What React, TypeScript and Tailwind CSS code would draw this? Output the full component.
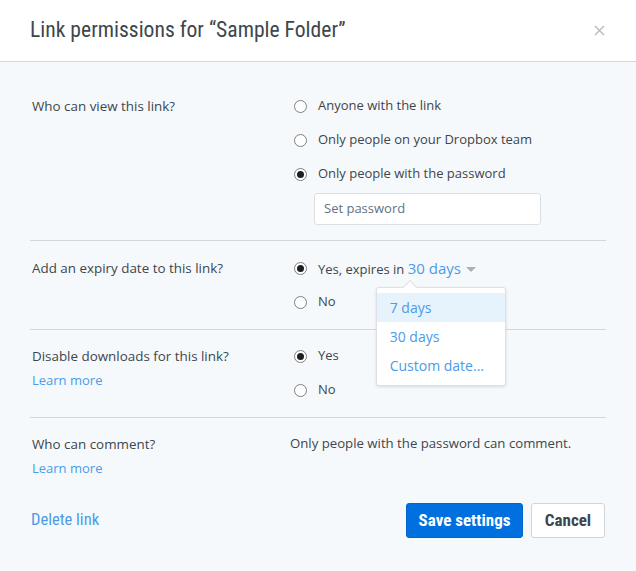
import React from 'react';

const Radio = ({ checked = false }: { checked?: boolean }) => (
  <span className="w-[13px] h-[13px] rounded-full border border-[#7b8187] bg-white flex items-center justify-center shrink-0">
    {checked && <span className="w-[7px] h-[7px] rounded-full bg-[#1e1e1e]" />}
  </span>
);

const Option = ({ checked, children }: { checked?: boolean; children: React.ReactNode }) => (
  <div className="h-[34px] flex items-center gap-[11px] pl-[4px]">
    <Radio checked={checked} />
    <span>{children}</span>
  </div>
);

const Label = ({ text, learnMore }: { text: string; learnMore?: boolean }) => (
  <div className="pt-[5px] pl-[2px] leading-[24px] text-[13.4px]">
    <div>{text}</div>
    {learnMore && <div className="text-[#4a9be9] text-[13px]">Learn more</div>}
  </div>
);

const cond = "font-['Liberation_Sans_Narrow','Roboto_Condensed','Roboto',sans-serif]";

export default function App() {
  return (
    <div className="w-[636px] h-[571px] bg-[#f6f9fb] text-[13px] text-[#3d464d] font-['Open_Sans','Liberation_Sans',sans-serif]">
      <div className="h-[62px] bg-white border-b border-[#d3d8dc] flex items-center justify-between pl-[30px] pr-[30px]">
        <h1 className={`${cond} text-[21.6px] text-[#3d464d]`}>
          Link permissions for “Sample Folder”
        </h1>
        <svg width="11" height="11" viewBox="0 0 11 11" className="mr-[1px]">
          <path d="M1 1 L10 10 M10 1 L1 10" stroke="#b8bec4" strokeWidth="1.5" />
        </svg>
      </div>

      <div className="px-[30px]">
        <div className="grid grid-cols-[260px_1fr] pt-[27px] pb-[15px] border-b border-[#d3d8dc]">
          <Label text="Who can view this link?" />
          <div>
            <Option>Anyone with the link</Option>
            <Option>Only people on your Dropbox team</Option>
            <Option checked>Only people with the password</Option>
            <div className="pl-[24px] mt-[2px]">
              <div className="w-[227px] h-[32px] bg-white border border-[#dce0e3] rounded-[3px] flex items-center px-[9px] text-[#637282]">
                Set password
              </div>
            </div>
          </div>
        </div>

        <div className="grid grid-cols-[260px_1fr] pt-[10px] pb-[10px] border-b border-[#d3d8dc]">
          <Label text="Add an expiry date to this link?" />
          <div>
            <Option checked>
              Yes, expires in{' '}
              <span className="relative text-[#4a9be9] text-[15px]">
                30 days
                <span className="inline-block ml-[5px] align-middle w-0 h-0 border-l-[5px] border-r-[5px] border-t-[5px] border-l-transparent border-r-transparent border-t-[#a9b0b7]" />
                <div className="absolute left-[-32px] top-[29px] w-[130px] bg-white border border-[#dde1e5] rounded-[3px] shadow-[0_1px_3px_rgba(0,0,0,0.12)] py-[5px] z-10 text-[14px]">
                  <div className="absolute -top-[6px] left-[28px] w-[10px] h-[10px] bg-white border-l border-t border-[#dde1e5] rotate-45" />
                  <div className="relative h-[29px] flex items-center pl-[13px] bg-[#e6f2fc]">7 days</div>
                  <div className="h-[29px] flex items-center pl-[13px]">30 days</div>
                  <div className="h-[29px] flex items-center pl-[13px]">Custom date...</div>
                </div>
              </span>
            </Option>
            <Option>No</Option>
          </div>
        </div>

        <div className="grid grid-cols-[260px_1fr] pt-[9px] pb-[10px] border-b border-[#d3d8dc]">
          <Label text="Disable downloads for this link?" learnMore />
          <div>
            <Option checked>Yes</Option>
            <Option>No</Option>
          </div>
        </div>

        <div className="grid grid-cols-[260px_1fr] pt-[9px]">
          <Label text="Who can comment?" learnMore />
          <div className="h-[34px] flex items-center text-[13.2px]">Only people with the password can comment.</div>
        </div>

        <div className="flex items-center justify-between mt-[23px]">
          <span className={`${cond} text-[16.5px] text-[#4a9be9] pl-[1px]`}>Delete link</span>
          <div className="flex gap-[8px] pr-[1px]">
            <button className={`${cond} h-[35px] w-[117px] rounded-[3px] bg-[#0070e0] border border-[#0065cc] text-white text-[17px] font-bold`}>
              Save settings
            </button>
            <button className={`${cond} h-[35px] w-[74px] rounded-[3px] bg-white border border-[#d0d5da] text-[#3d464d] text-[17px] font-bold`}>
              Cancel
            </button>
          </div>
        </div>
      </div>
    </div>
  );
}
